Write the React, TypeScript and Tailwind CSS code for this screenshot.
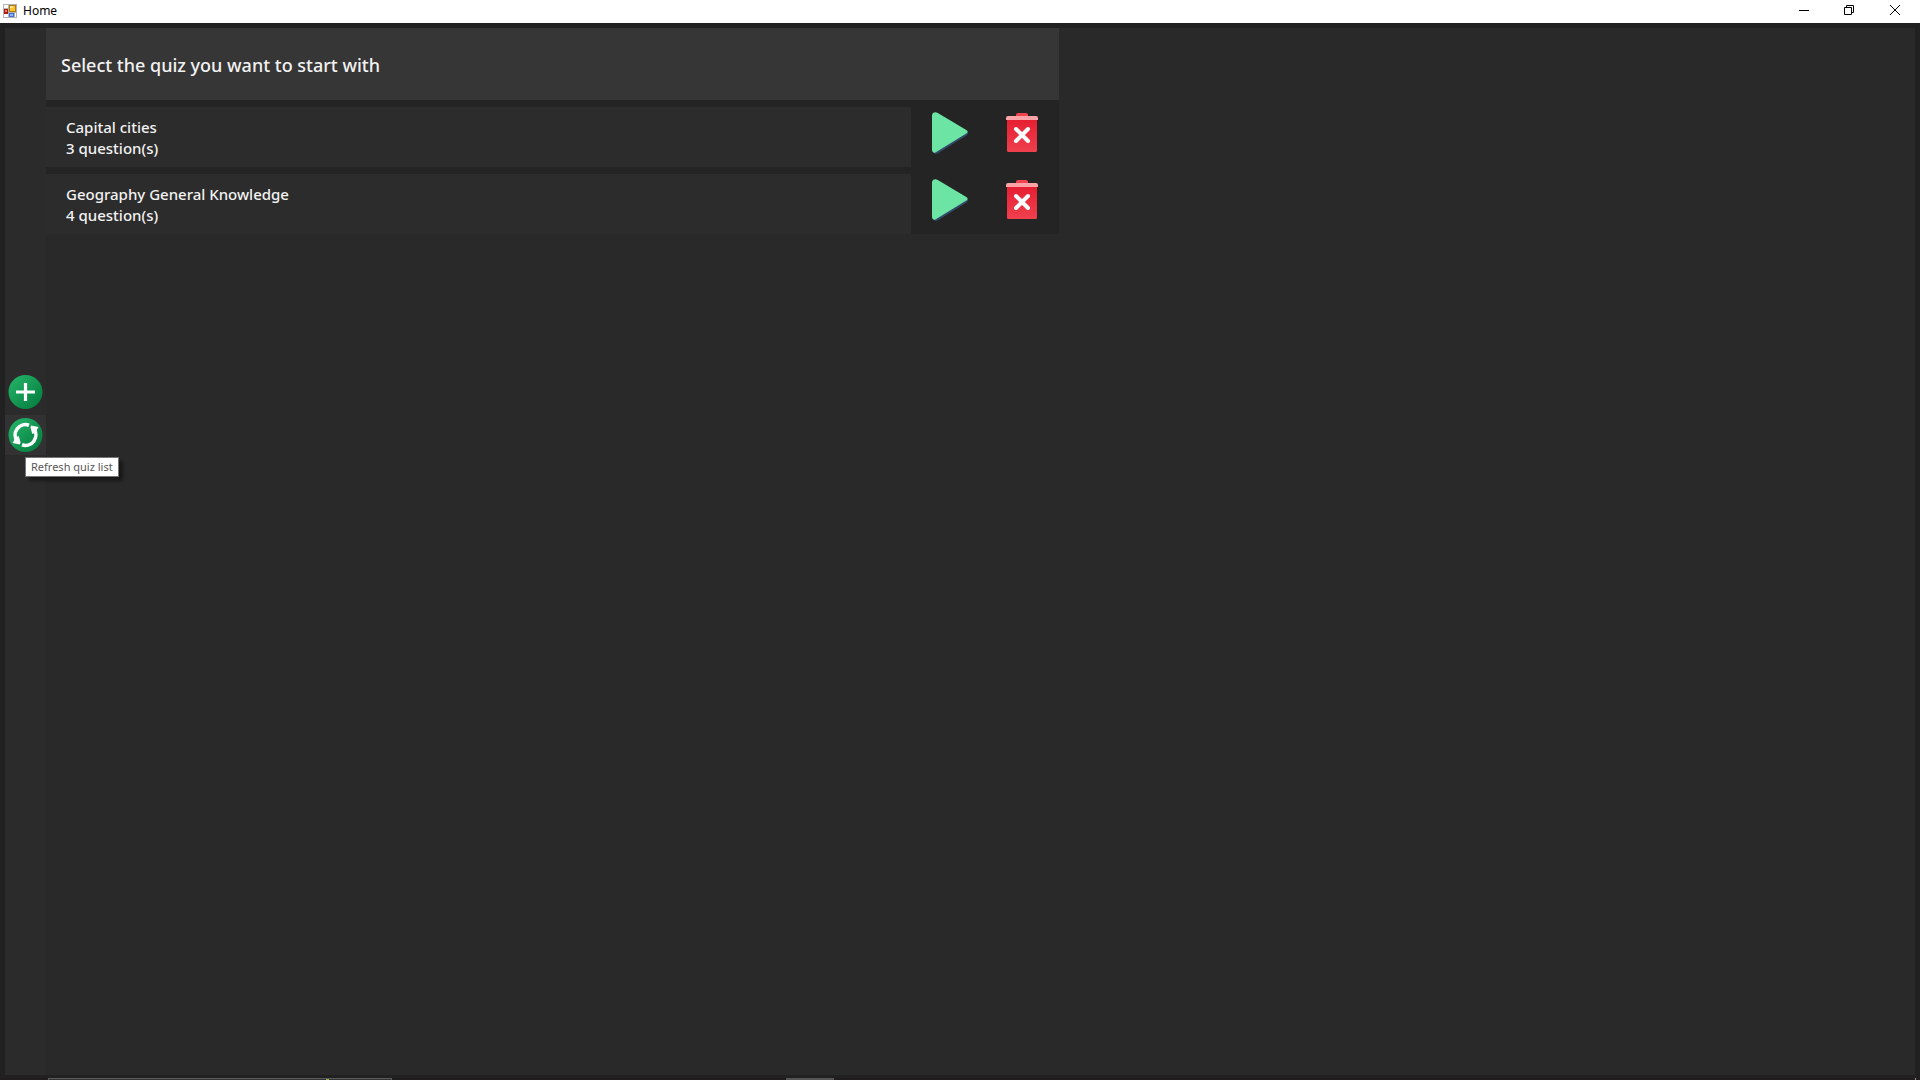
type Quiz = { id: number; title: string; questions: number };

const quizzes: Quiz[] = [
  { id: 1, title: "Capital cities", questions: 3 },
  { id: 2, title: "Geography General Knowledge", questions: 4 },
];

function AppIcon() {
  return (
    <svg width="14" height="14" viewBox="0 0 14 14" shapeRendering="crispEdges" aria-hidden="true">
      <rect width="14" height="14" fill="#b4b4b4" />
      <rect x="1" y="1" width="4" height="3" fill="#fff" />
      <rect x="1" y="10" width="4" height="3" fill="#fff" />
      <rect x="6" y="1" width="7" height="7" fill="#b07a10" />
      <rect x="7" y="2" width="5" height="5" fill="#fbc62c" />
      <rect x="7" y="2" width="3" height="2" fill="#fde58a" />
      <rect x="1" y="5" width="4" height="5" fill="#a61b12" />
      <rect x="2" y="6" width="2" height="2" fill="#f2796a" />
      <rect x="6" y="9" width="5" height="4" fill="#3c6fdc" />
      <rect x="7" y="10" width="3" height="2" fill="#8fb4fa" />
      <rect x="12" y="9" width="1" height="4" fill="#fff" />
    </svg>
  );
}

function TitleBar() {
  return (
    <header className="flex h-[23px] shrink-0 items-center justify-between bg-white text-black">
      <div className="flex items-center gap-1.5 pb-px pl-[3px]">
        <AppIcon />
        <h1 className="text-xs">Home</h1>
      </div>
      <div className="flex h-full pr-0.5 pb-[3px]">
        <button type="button" aria-label="Minimize" className="flex w-[45px] items-center justify-center">
          <svg width="10" height="10" viewBox="0 0 10 10" shapeRendering="crispEdges">
            <rect y="5" width="10" height="1" />
          </svg>
        </button>
        <button type="button" aria-label="Restore" className="flex w-[45px] items-center justify-center">
          <svg width="10" height="10" viewBox="0 0 10 10" fill="none" stroke="#000">
            <path d="M.5 2.5h7v7h-7zM2.5 2.5v-2h7v7h-2" />
          </svg>
        </button>
        <button type="button" aria-label="Close" className="flex w-[47px] items-center justify-center">
          <svg width="10" height="10" viewBox="0 0 10 10" stroke="#000">
            <path d="M0 0l10 10M10 0L0 10" />
          </svg>
        </button>
      </div>
    </header>
  );
}

function GreenGradient({ id }: { id: string }) {
  return (
    <linearGradient id={id} x1="0" y1="0" x2="1" y2="1">
      <stop offset="0.15" stopColor="#21ad64" />
      <stop offset="0.85" stopColor="#088242" />
    </linearGradient>
  );
}

function PlusIcon() {
  return (
    <svg width="35" height="35" viewBox="0 0 35 35" aria-hidden="true">
      <defs>
        <GreenGradient id="plus-fill" />
      </defs>
      <circle cx="17.5" cy="17" r="17" fill="url(#plus-fill)" />
      <path d="M17.5 8v18M8 17h19" stroke="#fff" strokeWidth="3.2" />
    </svg>
  );
}

function RefreshIcon() {
  return (
    <svg width="35" height="35" viewBox="0 0 35 35" aria-hidden="true">
      <defs>
        <GreenGradient id="refresh-fill" />
      </defs>
      <circle cx="17.5" cy="17" r="17" fill="url(#refresh-fill)" />
      <g fill="none" stroke="#fff" strokeWidth="3.6">
        <path d="M21 7.2A10.400 10.400 0 0 0 9.500 23.600" />
        <path d="M14 26.800A10.400 10.400 0 0 0 25.500 10.400" />
      </g>
      <path d="M4.500 25l8-.8-1.800-6.200-3 1.500zM4.500 25l7.500 1.500.5-2.300z" fill="#fff" />
      <path d="M30.500 9l-8 .8 1.800 6.200 3-1.500zM30.500 9l-7.500-1.500-.5 2.300z" fill="#fff" />
    </svg>
  );
}

function PlayIcon() {
  return (
    <svg width="36" height="42" viewBox="0 0 36 42" aria-hidden="true">
      <path
        d="M1 39.500c1 2.300 3 3 5 1.800L34.500 23.400c1.500-1 1.900-2.500 1.200-4.200L8 32z"
        fill="#33496a"
      />
      <path
        d="M0 3.400C0 .6 3-.7 5.400.7l28.900 17.300c1.700 1.100 1.700 2.500 0 3.600L4.600 39.800C2.500 41.500 0 40.500 0 38z"
        fill="#6ce4a4"
      />
    </svg>
  );
}

function TrashIcon() {
  return (
    <svg width="32" height="40" viewBox="0 0 32 40" aria-hidden="true">
      <defs>
        <linearGradient id="trash-fill" x1="0" y1="0" x2="0" y2="1">
          <stop offset="0" stopColor="#e61e32" />
          <stop offset="1" stopColor="#ef404d" />
        </linearGradient>
      </defs>
      <path d="M10 4V2a2 2 0 0 1 2-2h8a2 2 0 0 1 2 2v2z" fill="#f3434f" />
      <path d="M1 6h30v31.500a1.500 1.500 0 0 1-1.500 1.500h-27a1.500 1.500 0 0 1-1.500-1.500z" fill="url(#trash-fill)" />
      <path d="M0 7V5a2 2 0 0 1 2-2h28a2 2 0 0 1 2 2v2z" fill="#fba3a6" />
      <path d="M10 16l12 12M22 16L10 28" stroke="#fff" strokeWidth="4" strokeLinecap="round" />
    </svg>
  );
}

function Sidebar() {
  return (
    <nav aria-label="Quiz actions" className="flex w-[41px] shrink-0 flex-col gap-[3px] bg-[#2b2b2b] pt-[344px]">
      <button type="button" aria-label="Add quiz" className="flex h-10 items-center justify-center">
        <PlusIcon />
      </button>
      <div className="relative">
        <button
          type="button"
          aria-label="Refresh quiz list"
          aria-describedby="refresh-tip"
          className="flex h-10 w-full items-center justify-center bg-[#323232]"
        >
          <RefreshIcon />
        </button>
        <div
          id="refresh-tip"
          role="tooltip"
          className="absolute top-[42px] left-5 z-10 border border-[#767676] bg-white px-[5px] text-[11px] leading-[18px] whitespace-nowrap text-[#575757] shadow-[4px_4px_3px_rgba(0,0,0,0.4)]"
        >
          Refresh quiz list
        </div>
      </div>
    </nav>
  );
}

function QuizRow({ quiz }: { quiz: Quiz }) {
  return (
    <li className="flex h-[60px]">
      <div className="flex-1 bg-[#2c2c2c] px-5 pt-[10px] text-[15px] leading-[21px] font-medium">
        <p>{quiz.title}</p>
        <p>{quiz.questions} question(s)</p>
      </div>
      <div className="flex w-[148px] pr-px pb-2 pl-[3px]">
        <button type="button" aria-label={`Start ${quiz.title}`} className="flex flex-1 items-center justify-center">
          <PlayIcon />
        </button>
        <button type="button" aria-label={`Delete ${quiz.title}`} className="flex flex-1 items-center justify-center">
          <TrashIcon />
        </button>
      </div>
    </li>
  );
}

function TaskbarEdge() {
  return (
    <div className="flex h-[2px] shrink-0 bg-[#1f1d1d]" aria-hidden="true">
      <div className="ml-12 flex w-[344px] border-x border-t border-[#5c5c5c] bg-[#333] pl-[277px]">
        <span className="w-[3px] bg-[#8fb043]" />
      </div>
      <div className="ml-[394px] w-12 bg-[#555]" />
      <div className="mr-1 ml-auto w-px bg-[#8a8a8a]" />
    </div>
  );
}

export default function App() {
  return (
    <div className="flex min-h-screen flex-col bg-[#212121] font-['Noto_Sans','Open_Sans',sans-serif] text-[#f2f2f2]">
      <TitleBar />
      <div className="flex flex-1 px-[5px] pt-[5px] pb-[3px]">
        <Sidebar />
        <main className="flex-1 bg-[#292929]">
          <section className="w-[54.2%] bg-[#242424]">
            <h2 className="flex h-[72px] items-center bg-[#363636] px-[15px] pt-0.5 text-lg font-medium">
              Select the quiz you want to start with
            </h2>
            <ul className="flex flex-col gap-[7px] pt-[7px]">
              {quizzes.map((quiz) => (
                <QuizRow key={quiz.id} quiz={quiz} />
              ))}
            </ul>
          </section>
        </main>
      </div>
      <TaskbarEdge />
    </div>
  );
}
